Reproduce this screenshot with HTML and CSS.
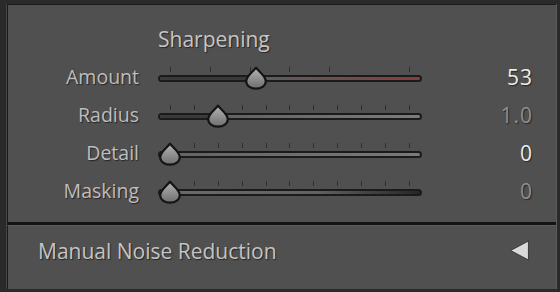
FILE: index.html
```html
<!DOCTYPE html>
<html>
<head>
<meta charset="utf-8">
<link rel="stylesheet" href="styles.css">
</head>
<body>
<div class="frame">
  <section class="panel sharpen">
    <h2 class="heading">Sharpening</h2>
    <div class="rows">
      <div class="label">Amount</div>
      <div class="slider">
        <div class="ticks t6"><i></i><i></i><i></i><i></i><i></i><i class="hide"></i><i></i></div>
        <div class="track amount"><div class="fill" style="width:98px"></div></div>
        <svg class="thumb" style="left:98px" viewBox="0 0 22 22" width="24" height="24"><use href="#drop"/></svg>
      </div>
      <div class="value bright">53</div>

      <div class="label">Radius</div>
      <div class="slider">
        <div class="ticks"><i></i><i></i><i></i><i></i><i></i><i></i><i></i><i></i><i></i><i></i><i></i></div>
        <div class="track radius"><div class="fill" style="width:60px"></div></div>
        <svg class="thumb" style="left:60px" viewBox="0 0 22 22" width="24" height="24"><use href="#drop"/></svg>
      </div>
      <div class="value dim">1.0</div>

      <div class="label">Detail</div>
      <div class="slider">
        <div class="ticks"><i></i><i></i><i></i><i></i><i></i><i></i><i></i><i></i><i></i><i></i><i></i></div>
        <div class="track detail"><div class="fill" style="width:12px"></div></div>
        <svg class="thumb" style="left:12px" viewBox="0 0 22 22" width="24" height="24"><use href="#drop"/></svg>
      </div>
      <div class="value bright">0</div>

      <div class="label">Masking</div>
      <div class="slider">
        <div class="ticks"><i></i><i></i><i></i><i></i><i></i><i></i><i></i><i></i><i></i><i></i><i></i></div>
        <div class="track masking"><div class="fill" style="width:12px"></div></div>
        <svg class="thumb" style="left:12px" viewBox="0 0 22 22" width="24" height="24"><use href="#drop"/></svg>
      </div>
      <div class="value dim">0</div>
    </div>
  </section>
  <section class="panel collapsed">
    <span class="title">Manual Noise Reduction</span>
    <svg class="arrow" viewBox="0 0 20 20" width="21" height="21"><path d="M18.5 1 L18.5 19 L1.5 10 Z" fill="#d9d9d9" stroke="#2a2a2a" stroke-width="0.8"/></svg>
  </section>
</div>
<svg width="0" height="0" class="defs">
  <defs>
    <linearGradient id="dg" x1="0" y1="0" x2="0" y2="1">
      <stop offset="0" stop-color="#b4b4b4"/>
      <stop offset="1" stop-color="#6e6e6e"/>
    </linearGradient>
    <symbol id="drop" viewBox="0 0 22 22">
      <path d="M11 1.5 C13 4.5 20 9 20 14 A9 6.8 0 0 1 2 14 C2 9 9 4.5 11 1.5 Z" fill="url(#dg)" stroke="#141414" stroke-width="2" stroke-linejoin="round"/>
    </symbol>
  </defs>
</svg>
</body>
</html>
```
FILE: styles.css
```css
html, body {
  margin: 0;
  padding: 0;
  background: #262626;
}
body {
  width: 560px;
  height: 292px;
  overflow: hidden;
  font-family: "Open Sans", "Noto Sans", sans-serif;
}
.defs { position: absolute; }
.frame {
  display: flex;
  flex-direction: column;
  padding: 4px 4px 3px 7px;
  height: 292px;
  box-sizing: border-box;
  background: #2a2a2a;
}
.panel {
  background: #505050;
  border-left: 1px solid #1a1a1a;
  box-shadow: -1px 0 0 #444, 1px 0 0 #5a5a5a;
}
.sharpen {
  height: 221px;
  border-top: 1px solid #1a1a1a;
  box-sizing: border-box;
  border-bottom: 3px solid #141414;
}
.heading {
  margin: 0;
  font-weight: 400;
  font-size: 21px;
  color: #c6c6c6;
  padding: 21px 0 0 150px;
  height: 33px;
  line-height: 26px;
  text-shadow: 1px 1px 1px #262626;
}
.rows {
  display: grid;
  grid-template-columns: 131px 264px 91px;
  column-gap: 19px;
  grid-auto-rows: 38px;
  align-items: center;
}
.label {
  text-align: right;
  font-size: 19.5px;
  color: #bdbdbd;
  text-shadow: 1px 1px 1px #262626;
  margin-top: -4px;
}
.value {
  text-align: right;
  font-size: 21px;
  letter-spacing: 1px;
  margin-right: -1px;
  text-shadow: 1px 1px 1px #262626;
  margin-top: -3px;
}
.bright { color: #ececec; }
.dim { color: #8e8e8e; }
.slider {
  position: relative;
  height: 38px;
}
.ticks {
  position: absolute;
  left: 12px;
  right: 12px;
  top: 8px;
  height: 5px;
  display: flex;
  justify-content: space-between;
}
.ticks i {
  width: 1px;
  height: 5px;
  background: #2e2e2e;
}
.ticks i.hide { visibility: hidden; }
.track {
  position: absolute;
  left: 0;
  right: 0;
  top: 16px;
  height: 7px;
  border-radius: 4px;
  box-sizing: border-box;
  border: 2px solid #1b1b1b;
  overflow: hidden;
}
.fill {
  height: 100%;
  background: #3a3a3a;
}
.amount { background: linear-gradient(90deg, #565656 0%, #5c5c5c 45%, #8a3c3c 100%); }
.radius { background: linear-gradient(90deg, #5a5a5a, #7c7c7c); }
.detail { background: linear-gradient(90deg, #626262, #7a7a7a); }
.masking { background: linear-gradient(90deg, #6a6a6a 0%, #626262 60%, #262626 100%); }
.thumb {
  position: absolute;
  top: 7px;
  margin-left: -12px;
}
.collapsed {
  flex: 1;
  display: flex;
  align-items: center;
  justify-content: space-between;
  padding: 0 26px 14px 30px;
  border-top: 1px solid #5c5c5c;
}
.title {
  font-size: 21px;
  color: #c4c4c4;
  text-shadow: 1px 1px 1px #262626;
}
.arrow { display: block; }
```
